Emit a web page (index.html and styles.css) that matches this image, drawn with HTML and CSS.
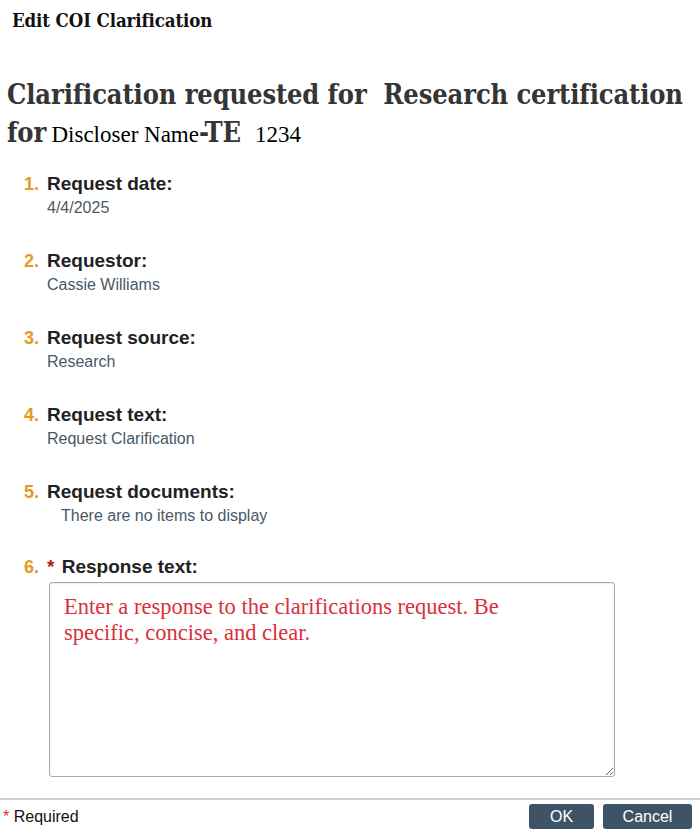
FILE: index.html
```html
<!DOCTYPE html>
<html lang="en">
<head>
    <meta charset="UTF-8">
    <title>Edit COI Clarification</title>
    <link rel="stylesheet" href="styles.css">
</head>
<body>
    <div class="dialog">
        <h2 class="dialog__title">Edit COI Clarification</h2>

        <div class="dialog__body">
            <h1 class="heading"><span>Clarification requested for &nbsp;Research certification</span> <span>for</span> <span class="plain plain--name">Discloser Name</span><span>-TE</span> <span class="plain">&nbsp;1234</span></h1>

            <ol class="fields">
                <li class="field">
                    <span class="field__num">1.</span>
                    <div class="field__main">
                        <div class="field__label">Request date:</div>
                        <div class="field__value">4/4/2025</div>
                    </div>
                </li>
                <li class="field">
                    <span class="field__num">2.</span>
                    <div class="field__main">
                        <div class="field__label">Requestor:</div>
                        <div class="field__value">Cassie Williams</div>
                    </div>
                </li>
                <li class="field">
                    <span class="field__num">3.</span>
                    <div class="field__main">
                        <div class="field__label">Request source:</div>
                        <div class="field__value">Research</div>
                    </div>
                </li>
                <li class="field">
                    <span class="field__num">4.</span>
                    <div class="field__main">
                        <div class="field__label">Request text:</div>
                        <div class="field__value">Request Clarification</div>
                    </div>
                </li>
                <li class="field field--short">
                    <span class="field__num">5.</span>
                    <div class="field__main">
                        <div class="field__label">Request documents:</div>
                        <div class="field__value field__value--empty">There are no items to display</div>
                    </div>
                </li>
                <li class="field field--last">
                    <span class="field__num">6.</span>
                    <div class="field__main">
                        <div class="field__label"><span class="req">*</span> Response text:</div>
                        <textarea class="response">Enter a response to the clarifications request. Be specific, concise, and clear.</textarea>
                    </div>
                </li>
            </ol>
        </div>

        <div class="dialog__footer">
            <span class="required-note"><span class="req-small">*</span> Required</span>
            <div class="buttons">
                <button class="btn">OK</button>
                <button class="btn btn--wide">Cancel</button>
            </div>
        </div>
    </div>
</body>
</html>
```

FILE: styles.css
```css
body {
    margin: 0;
    background: #ffffff;
    font-family: "Liberation Sans", Arial, sans-serif;
    color: #222;
}
.dialog {
    width: 700px;
    height: 833px;
    display: flex;
    flex-direction: column;
}
.dialog__title {
    margin: 0;
    padding: 10px 12px 0;
    height: 30px;
    font-family: "DejaVu Serif", serif;
    font-stretch: condensed;
    font-size: 18.5px;
    line-height: 22px;
    font-weight: bold;
    color: #111;
    letter-spacing: -0.1px;
}
.dialog__body {
    flex: 1;
    padding: 0 8px 0 7px;
}
.heading {
    margin: 36px 0 0 0;
    font-family: "DejaVu Serif", serif;
    font-stretch: condensed;
    font-size: 27px;
    line-height: 38px;
    font-weight: bold;
    color: #353535;
    letter-spacing: -0.12px;
}
.plain {
    font-family: "Liberation Serif", "Times New Roman", serif;
    font-stretch: normal;
    font-weight: normal;
    font-size: 23px;
    line-height: 1;
    letter-spacing: 0;
    color: #000;
}
.plain--name {
    margin-left: -3px;
}
.fields {
    list-style: none;
    margin: 21px 0 0 0;
    padding: 0 0 0 17px;
}
.field {
    display: flex;
    gap: 5px;
    height: 77px;
}
.field--short {
    height: 75px;
}
.field--last {
    height: auto;
}
.field__num {
    color: #e39a26;
    font-weight: bold;
    font-size: 18px;
    line-height: 22px;
    width: 18px;
}
.field__main {
    flex: 1;
}
.field__label {
    font-weight: bold;
    font-size: 19px;
    line-height: 22px;
    color: #222;
}
.field__value {
    font-size: 16px;
    line-height: 20px;
    margin-top: 3px;
    color: #4a5866;
}
.field__value--empty {
    padding-left: 14px;
}
.req {
    color: #b81c1c;
    margin-right: 2px;
}
.response {
    display: block;
    box-sizing: border-box;
    margin: 4px 0 0 2px;
    width: 566px;
    height: 195px;
    border: 1px solid #a9a9a9;
    border-radius: 3px;
    padding: 11px 80px 12px 14px;
    font-family: "Liberation Serif", "Times New Roman", serif;
    font-size: 22.5px;
    line-height: 26px;
    color: #d9303a;
    resize: vertical;
    box-shadow: inset 0 1px 2px rgba(0, 0, 0, 0.08);
}
.dialog__footer {
    border-top: 2px solid #cfcfcf;
    height: 33px;
    display: flex;
    align-items: center;
    justify-content: space-between;
    padding: 0 8px 0 3px;
}
.required-note {
    font-size: 16px;
    color: #111;
}
.req-small {
    color: #d0312d;
}
.buttons {
    display: flex;
    gap: 9px;
}
.btn {
    background: #3f5366;
    color: #fff;
    border: none;
    border-radius: 3px;
    height: 25px;
    width: 65px;
    font-family: "Liberation Sans", Arial, sans-serif;
    font-size: 16px;
    padding: 0;
}
.btn--wide {
    width: 89px;
}
```
